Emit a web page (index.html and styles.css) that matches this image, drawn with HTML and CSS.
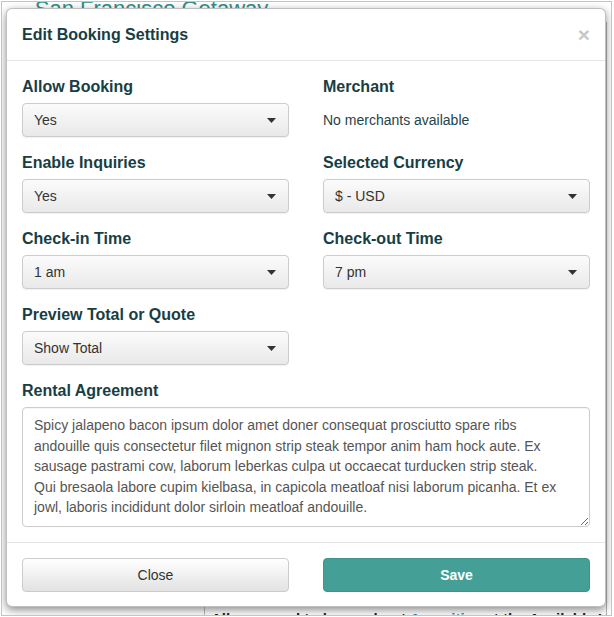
FILE: index.html
```html
<!DOCTYPE html>
<html>
<head>
<meta charset="utf-8">
<title>Edit Booking Settings</title>
<link rel="stylesheet" href="styles.css">
</head>
<body>
<div class="window">
  <h1 class="page-title"><span class="pin">&#9679;</span> San Francisco Getaway</h1>
  <div class="page-body">
    <div class="side"></div>
    <div class="main">
      <p class="main-text">All you need to know about <a class="link">Amenities</a> at the Available Villa Rental Home</p>
    </div>
  </div>

  <div class="modal">
    <div class="modal-header">
      <h4 class="modal-title">Edit Booking Settings</h4>
      <span class="close">&times;</span>
    </div>
    <div class="modal-body">
      <div class="grid">
        <div class="group">
          <label class="label">Allow Booking</label>
          <div class="select"><span>Yes</span><svg class="caret" width="9" height="5" viewBox="0 0 9 5"><path d="M0 0H9L4.5 5Z" fill="#333"/></svg></div>
        </div>
        <div class="group">
          <label class="label">Merchant</label>
          <p class="static">No merchants available</p>
        </div>
        <div class="group">
          <label class="label">Enable Inquiries</label>
          <div class="select"><span>Yes</span><svg class="caret" width="9" height="5" viewBox="0 0 9 5"><path d="M0 0H9L4.5 5Z" fill="#333"/></svg></div>
        </div>
        <div class="group">
          <label class="label">Selected Currency</label>
          <div class="select"><span>$ - USD</span><svg class="caret" width="9" height="5" viewBox="0 0 9 5"><path d="M0 0H9L4.5 5Z" fill="#333"/></svg></div>
        </div>
        <div class="group">
          <label class="label">Check-in Time</label>
          <div class="select"><span>1 am</span><svg class="caret" width="9" height="5" viewBox="0 0 9 5"><path d="M0 0H9L4.5 5Z" fill="#333"/></svg></div>
        </div>
        <div class="group">
          <label class="label">Check-out Time</label>
          <div class="select"><span>7 pm</span><svg class="caret" width="9" height="5" viewBox="0 0 9 5"><path d="M0 0H9L4.5 5Z" fill="#333"/></svg></div>
        </div>
        <div class="group">
          <label class="label">Preview Total or Quote</label>
          <div class="select"><span>Show Total</span><svg class="caret" width="9" height="5" viewBox="0 0 9 5"><path d="M0 0H9L4.5 5Z" fill="#333"/></svg></div>
        </div>
        <div class="group"></div>
      </div>
      <div class="group last">
        <label class="label">Rental Agreement</label>
        <textarea class="textarea">Spicy jalapeno bacon ipsum dolor amet doner consequat prosciutto spare ribs
andouille quis consectetur filet mignon strip steak tempor anim ham hock aute. Ex
sausage pastrami cow, laborum leberkas culpa ut occaecat turducken strip steak.
Qui bresaola labore cupim kielbasa, in capicola meatloaf nisi laborum picanha. Et ex
jowl, laboris incididunt dolor sirloin meatloaf andouille.</textarea>
      </div>
    </div>
    <div class="modal-footer">
      <button class="btn btn-default">Close</button>
      <button class="btn btn-primary">Save</button>
    </div>
  </div>
</div>
</body>
</html>
```

FILE: styles.css
```css
* { box-sizing: border-box; }

html, body {
  margin: 0;
  padding: 0;
  background: #ffffff;
}

body {
  font-family: "Liberation Sans", Arial, Helvetica, sans-serif;
  font-size: 14px;
  color: #333;
}

.window {
  position: relative;
  width: 611px;
  height: 615px;
  margin: 1px 0 0 1px;
  border: 1px solid #c4c4c4;
  overflow: hidden;
  display: flex;
  flex-direction: column;
}

.page-title {
  margin: -4px 0 0 17px;
  font-size: 22px;
  line-height: 22px;
  font-weight: normal;
  color: #2f9088;
  white-space: nowrap;
}

.pin {
  font-size: 16px;
}

.page-body {
  flex: 1;
  display: flex;
  min-width: 0;
}

.side {
  flex: 0 0 203px;
  border-right: 1px solid #bdbdbd;
}

.main {
  flex: 1;
  min-width: 0;
  overflow: hidden;
  margin-right: 4px;
  border-right: 1px solid #b5b5b5;
  display: flex;
  align-items: flex-end;
  padding-left: 6px;
}

.main-text {
  margin: 0 0 -14px 0;
  font-size: 15px;
  font-weight: bold;
  line-height: 20px;
  color: #222;
  white-space: nowrap;
}

.link {
  color: #2f9088;
}

/* modal */
.modal {
  position: absolute;
  left: 4px;
  top: 6px;
  width: 600px;
  background: #fff;
  border: 1px solid rgba(0, 0, 0, 0.25);
  border-radius: 6px;
  box-shadow: 0 3px 8px rgba(0, 0, 0, 0.45);
}

.modal-header {
  display: flex;
  justify-content: space-between;
  align-items: center;
  padding: 15px;
  border-bottom: 1px solid #e5e5e5;
}

.modal-title {
  margin: 0;
  font-size: 16px;
  line-height: 21px;
  font-weight: bold;
  color: #173e43;
}

.close {
  font-size: 21px;
  line-height: 21px;
  font-weight: bold;
  color: #c8c8c8;
}

.modal-body {
  padding: 15px;
}

.grid {
  display: grid;
  grid-template-columns: 1fr 1fr;
  column-gap: 34px;
}

.group {
  margin-bottom: 15px;
}

.group.last {
  margin-bottom: 0;
}

.label {
  display: block;
  margin-bottom: 5px;
  font-size: 16px;
  line-height: 22px;
  font-weight: bold;
  color: #173e43;
}

.static {
  margin: 0;
  height: 34px;
  line-height: 34px;
  font-size: 14px;
  color: #1f4449;
}

.select {
  height: 34px;
  display: flex;
  align-items: center;
  justify-content: space-between;
  padding: 0 11px 0 11px;
  border: 1px solid #cccccc;
  border-radius: 4px;
  background: linear-gradient(to bottom, #fbfbfb 0%, #e9e9e9 100%);
  box-shadow: 0 1px 1px rgba(0, 0, 0, 0.06);
  font-size: 14px;
  color: #333;
}

.caret {
  display: block;
  margin-right: 1px;
}

.textarea {
  display: block;
  width: 100%;
  height: 120px;
  margin: 0;
  padding: 7px 11px;
  border: 1px solid #cccccc;
  border-radius: 4px;
  font-family: "Liberation Sans", Arial, Helvetica, sans-serif;
  font-size: 14px;
  line-height: 20.5px;
  color: #555;
  resize: vertical;
  overflow: hidden;
  box-shadow: inset 0 1px 1px rgba(0, 0, 0, 0.04);
}

.modal-footer {
  display: grid;
  grid-template-columns: 1fr 1fr;
  column-gap: 34px;
  padding: 15px 15px 14px;
  border-top: 1px solid #e5e5e5;
}

.btn {
  height: 34px;
  margin: 0;
  border-radius: 4px;
  font-family: "Liberation Sans", Arial, Helvetica, sans-serif;
  font-size: 14px;
  line-height: 20px;
}

.btn-default {
  border: 1px solid #cccccc;
  background: linear-gradient(to bottom, #ffffff 0%, #e2e2e2 100%);
  color: #333;
}

.btn-primary {
  border: 1px solid #3f958e;
  background: #449f97;
  color: #ffffff;
  font-weight: bold;
}
```
